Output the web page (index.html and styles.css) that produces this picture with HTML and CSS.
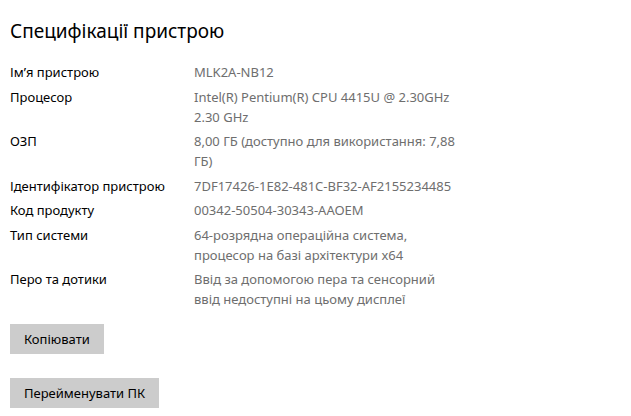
FILE: index.html
```html
<!DOCTYPE html>
<html lang="uk">
    <head>
        <meta charset="UTF-8" />
        <meta name="viewport" content="width=device-width, initial-scale=1.0" />
        <title>Специфікації пристрою</title>
        <link rel="stylesheet" href="styles.css">
    </head>
    <body>
        <div class="page">
            <h1>Специфікації пристрою</h1>

            <!-- Список характеристик -->
            <dl class="specs">
                <dt>Ім’я пристрою</dt>
                <dd>MLK2A-NB12</dd>

                <dt>Процесор</dt>
                <dd>Intel(R) Pentium(R) CPU 4415U @ 2.30GHz<br>2.30 GHz</dd>

                <dt>ОЗП</dt>
                <dd>8,00 ГБ (доступно для використання: 7,88<br>ГБ)</dd>

                <dt>Ідентифікатор пристрою</dt>
                <dd>7DF17426-1E82-481C-BF32-AF2155234485</dd>

                <dt>Код продукту</dt>
                <dd>00342-50504-30343-AAOEM</dd>

                <dt>Тип системи</dt>
                <dd>64-розрядна операційна система,<br>процесор на базі архітектури x64</dd>

                <dt>Перо та дотики</dt>
                <dd>Ввід за допомогою пера та сенсорний<br>ввід недоступні на цьому дисплеї</dd>
            </dl>

            <div class="actions">
                <button class="btn">Копіювати</button>
                <button class="btn">Перейменувати ПК</button>
            </div>
        </div>
    </body>
</html>
```

FILE: styles.css
```css
body {
    font-family: "Segoe UI", "Noto Sans", sans-serif;
    margin: 0;
    background-color: #fff;
    color: #000;
}
.page {
    padding: 17px 10px 0 10px;
}
h1 {
    font-size: 19px;
    font-weight: 400;
    line-height: 28px;
    margin: 0 0 17px 0;
}
.specs {
    display: grid;
    grid-template-columns: 184px 1fr;
    row-gap: 4.5px;
    margin: 0;
    font-size: 13px;
    line-height: 20px;
}
.specs dt {
    margin: 0;
}
.specs dd {
    margin: 0;
    color: #6e6e6e;
}
.actions {
    display: flex;
    flex-direction: column;
    align-items: flex-start;
    gap: 24px;
    margin-top: 15px;
}
.btn {
    font-family: inherit;
    font-size: 13px;
    height: 30px;
    padding: 0 14px;
    border: none;
    background-color: #cccccc;
    color: #000;
    cursor: pointer;
}
.btn:hover {
    background-color: #bdbdbd;
}
```
